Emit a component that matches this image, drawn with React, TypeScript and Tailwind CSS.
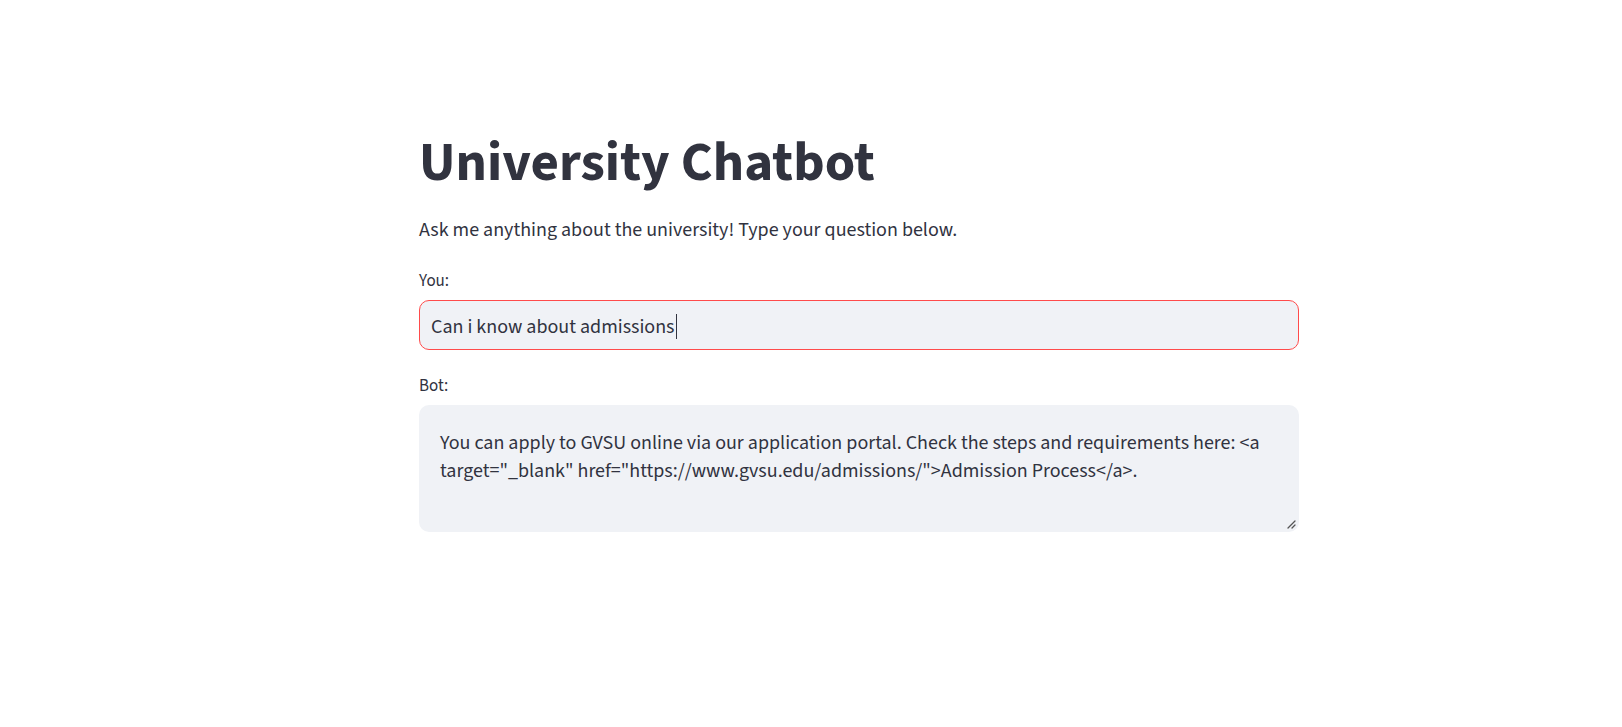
export default function App() {
  return (
    <div
      className="min-h-screen bg-white text-[#31333F]"
      style={{ fontFamily: '"Source Sans Pro", "Source Sans 3", Lato, "Liberation Sans", sans-serif' }}
    >
      <div className="ml-[419px] w-[880px] pt-[129px]">
        <h1 className="text-[55px] font-bold leading-[68px]">University Chatbot</h1>

        <p className="mt-[19px] text-[20px] leading-[28px]">
          Ask me anything about the university! Type your question below.
        </p>

        <div className="mt-[26px]">
          <label className="block text-[17px] leading-[22px]">You:</label>
          <div className="mt-[8px] flex h-[50px] items-center rounded-[10px] border border-[#ff4b4b] bg-[#f0f2f6] px-[11px] pt-[3px] text-[20px] leading-[28px]">
            <span>Can i know about admissions</span>
            <span className="ml-[1px] inline-block h-[25px] w-[1px] bg-[#31333F]" />
          </div>
        </div>

        <div className="mt-[25px]">
          <label className="block text-[17px] leading-[22px]">Bot:</label>
          <div className="relative mt-[8px] h-[127px] rounded-[10px] bg-[#f0f2f6] px-[21px] pt-[24px] text-[20px] leading-[28px]">
            <div>You can apply to GVSU online via our application portal. Check the steps and requirements here: &lt;a</div>
            <div>target="_blank" href="https://www.gvsu.edu/admissions/"&gt;Admission Process&lt;/a&gt;.</div>
            <svg className="absolute bottom-[3px] right-[3px]" width="10" height="10" viewBox="0 0 10 10">
              <path d="M2 9 L9 2 M6 9 L9 6" stroke="#555" strokeWidth="1.3" strokeLinecap="round" />
            </svg>
          </div>
        </div>
      </div>
    </div>
  );
}
